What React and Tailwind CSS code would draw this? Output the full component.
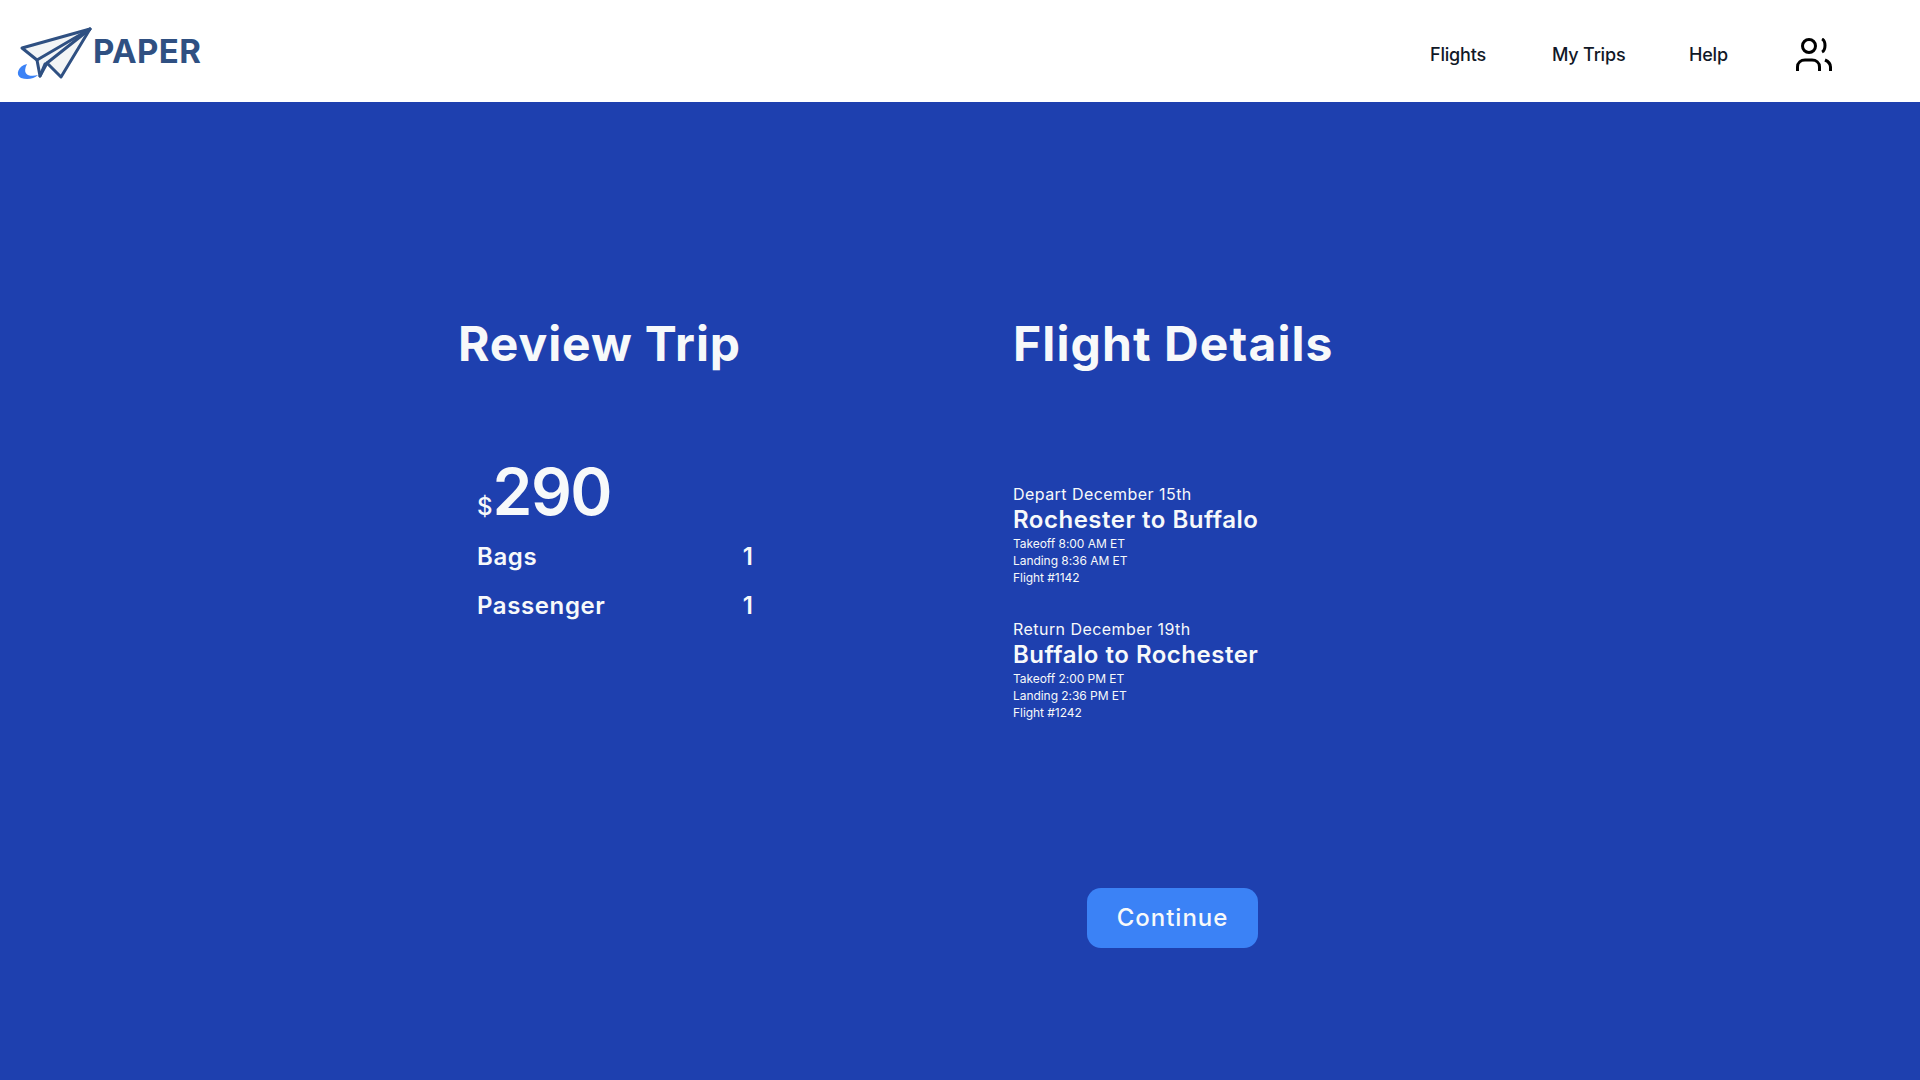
const FONT = "font-['Inter','Liberation_Sans',sans-serif]";

function Logo() {
  return (
    <svg width="94" height="62" viewBox="0 20 94 62" fill="none" className="shrink-0">
      {/* swoosh */}
      <path d="M27 64 C18 66 15 75 21 78 C27 80 34 79 38 75 C31 77 21 76 27 64 Z" fill="#3b82f6" />
      {/* plane */}
      <path d="M90 29 L22 48 L37 60 L40 76 L47 63 L61 77 Z" fill="#f3f5f6" />
      <g stroke="#2f5082" strokeWidth="3" strokeLinejoin="round" strokeLinecap="round">
        <path d="M90 29 L22 48 L37 60 L40 76 L47 63 L61 77 L90 29 Z" />
        <path d="M90 29 L37 60" />
        <path d="M90 29 L47 63" />
        <path d="M40 76 L45 64" />
      </g>
    </svg>
  );
}

function UsersIcon() {
  return (
    <svg width="36" height="33" viewBox="0 0 36 33" fill="none" stroke="#000" strokeWidth="3" strokeLinecap="butt" className="shrink-0">
      <circle cx="13" cy="8" r="6.5" />
      <path d="M26 1 C30 3 30 12 26 14" />
      <path d="M1.5 33 V29 C1.5 24.5 5 22 9 22 H16 C20 22 23.5 24.5 23.5 29 V33" />
      <path d="M29 22 C32.5 23.5 34.5 26 34.5 29 V33" />
    </svg>
  );
}

function Leg({ date, route, takeoff, landing, flight }) {
  return (
    <div className="flex flex-col">
      <div className="h-[24px] text-[16px] leading-[24px] font-normal tracking-[0.45px]">{date}</div>
      <div className="h-[27px] text-[24px] leading-[27px] font-semibold tracking-[0.5px]">{route}</div>
      <div className="mt-[2px] text-[12px] leading-[17px] font-normal tracking-[-0.05px]">
        <div>{takeoff}</div>
        <div>{landing}</div>
        <div>{flight}</div>
      </div>
    </div>
  );
}

export default function App() {
  return (
    <div className={`${FONT} min-h-screen flex flex-col bg-[#1e40af] text-[#f7f9fa]`}>
      {/* Header */}
      <header className="h-[102px] bg-white flex items-center pr-[88px]">
        <div className="flex items-center">
          <Logo />
          <span className="-ml-[1px] pt-[2px] text-[33px] font-bold text-[#2f5082] tracking-[0.4px]">PAPER</span>
        </div>
        <nav className="ml-auto flex items-center text-[18px] font-medium text-[#111827] tracking-[-0.2px] pt-[7px]">
          <span className="w-[122px]">Flights</span>
          <span className="w-[137px]">My Trips</span>
          <span className="w-[107px]">Help</span>
          <UsersIcon />
        </nav>
      </header>

      {/* Content */}
      <main className="flex pl-[458px] pt-[206px]">
        <section className="w-[555px]">
          <h1 className="text-[48px] leading-[72px] font-bold tracking-[0.9px]">Review Trip</h1>
          <div className="mt-[68px] ml-[19px] w-[276px]">
            <div className="flex items-baseline h-[84px] pt-[2px]">
              <span className="text-[24px] font-medium">$</span>
              <span className="text-[64px] leading-[84px] font-semibold tracking-[-1.5px]">290</span>
            </div>
            <div className="flex justify-between h-[49px] items-center text-[24px] font-semibold">
              <span className="tracking-[0.6px]">Bags</span>
              <span>1</span>
            </div>
            <div className="flex justify-between h-[49px] items-center text-[24px] font-semibold">
              <span className="tracking-[0.6px]">Passenger</span>
              <span>1</span>
            </div>
          </div>
        </section>

        <section>
          <h1 className="text-[48px] leading-[72px] font-bold tracking-[1.1px]">Flight Details</h1>
          <div className="mt-[102px] flex flex-col gap-[31px]">
            <Leg date="Depart December 15th" route="Rochester to Buffalo" takeoff="Takeoff 8:00 AM ET" landing="Landing 8:36 AM ET" flight="Flight #1142" />
            <Leg date="Return December 19th" route="Buffalo to Rochester" takeoff="Takeoff 2:00 PM ET" landing="Landing 2:36 PM ET" flight="Flight #1242" />
          </div>
          <button className="mt-[167px] ml-[74px] w-[171px] h-[60px] rounded-[14px] bg-[#3b82f6] text-[24px] font-medium text-[#f7f9fa] tracking-[1px]">
            Continue
          </button>
        </section>
      </main>
    </div>
  );
}
